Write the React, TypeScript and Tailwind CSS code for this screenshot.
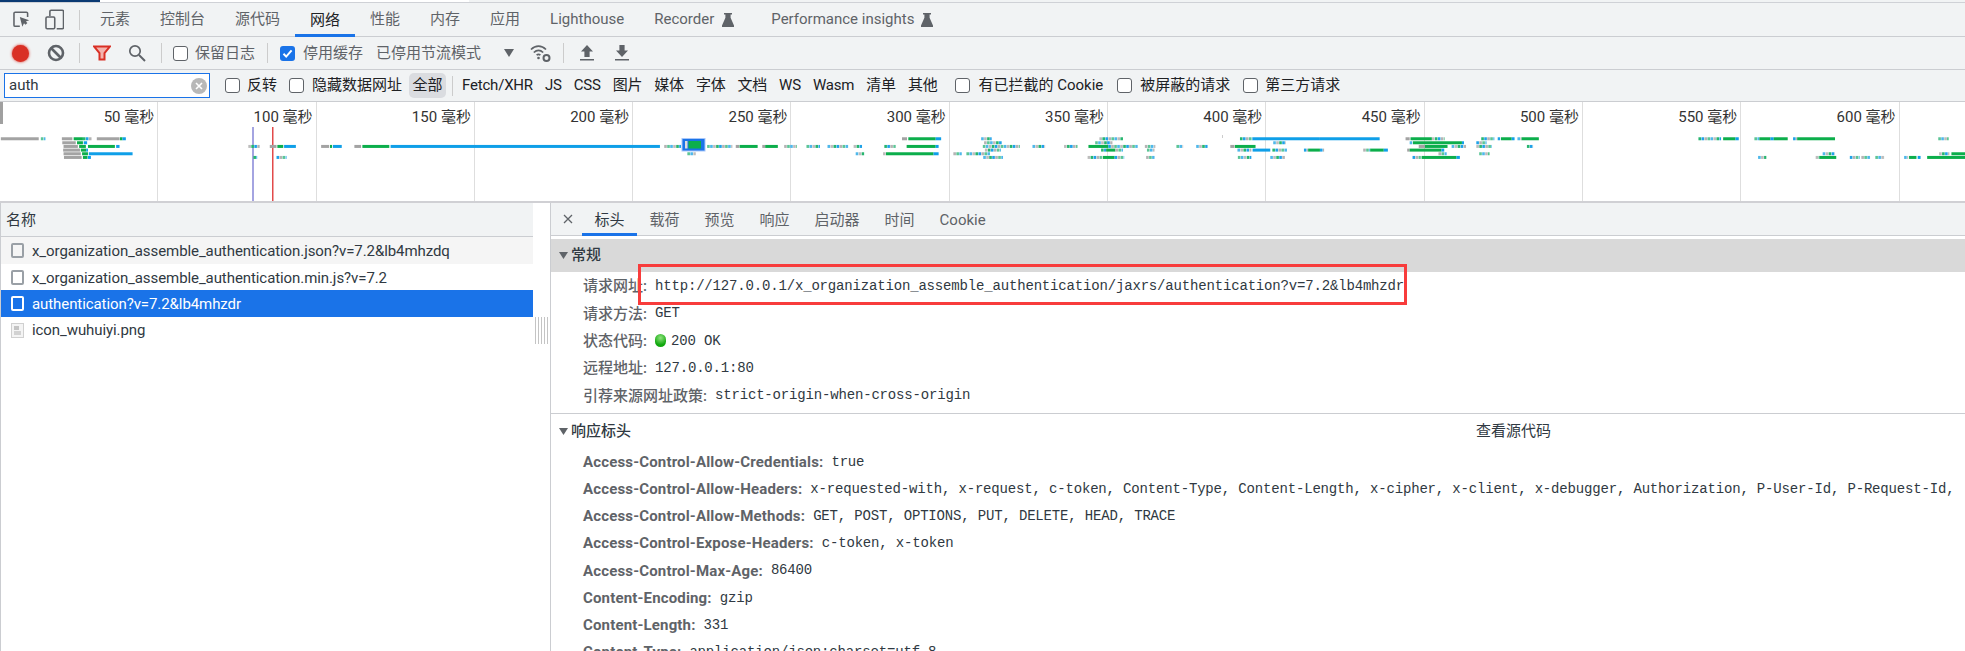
import type { ReactNode } from "react";

const MONO = "font-['Liberation_Mono','Noto_Sans_CJK_SC',monospace] text-[14px] tracking-[-0.17px] font-normal text-[#303942]";

const TABS = ["元素", "控制台", "源代码", "网络", "性能", "内存", "应用", "Lighthouse"];
const DETAIL_TABS = ["标头", "载荷", "预览", "响应", "启动器", "时间", "Cookie"];
const TYPES = ["Fetch/XHR", "JS", "CSS", "图片", "媒体", "字体", "文档", "WS", "Wasm", "清单", "其他"];
const TICKS = [50, 100, 150, 200, 250, 300, 350, 400, 450, 500, 550, 600];

const GENERAL: [string, ReactNode][] = [
  ["请求网址", "http://127.0.0.1/x_organization_assemble_authentication/jaxrs/authentication?v=7.2&lb4mhzdr"],
  ["请求方法", "GET"],
  ["状态代码", <><span className="inline-block w-[11px] h-[13px] rounded-full bg-[radial-gradient(circle_at_50%_30%,#8fe37d,#12a80f_65%)] mr-[5px] align-[-2px]" />200 OK</>],
  ["远程地址", "127.0.0.1:80"],
  ["引荐来源网址政策", "strict-origin-when-cross-origin"],
];

const RESPONSE: [string, string][] = [
  ["Access-Control-Allow-Credentials", "true"],
  ["Access-Control-Allow-Headers", "x-requested-with, x-request, c-token, Content-Type, Content-Length, x-cipher, x-client, x-debugger, Authorization, P-User-Id, P-Request-Id,"],
  ["Access-Control-Allow-Methods", "GET, POST, OPTIONS, PUT, DELETE, HEAD, TRACE"],
  ["Access-Control-Expose-Headers", "c-token, x-token"],
  ["Access-Control-Max-Age", "86400"],
  ["Content-Encoding", "gzip"],
  ["Content-Length", "331"],
  ["Content-Type", "application/json;charset=utf-8"],
];

// waterfall segments: row, from, to, kind (measured off the overview strip)
type Seg = [number, number, number, "g" | "e" | "b" | "m"];

const PART_A: Seg[] = [
  [116, 2, 92, "g"], [116, 97, 108, "m"], [116, 147, 172, "g"], [116, 175, 197, "e"], [116, 197, 218, "m"], [116, 230, 284, "g"], [116, 285, 291, "e"], [116, 291, 299, "b"],
  [128, 148, 180, "g"], [128, 183, 197, "e"], [128, 199, 207, "b"],
  [139, 151, 185, "g"], [139, 188, 204, "e"], [139, 209, 273, "e"], [139, 276, 284, "b"], [139, 590, 617, "m"], [139, 641, 657, "g"], [139, 659, 673, "e"], [139, 675, 703, "b"],
  [139, 763, 782, "g"], [139, 784, 789, "e"], [139, 791, 812, "b"], [139, 842, 858, "g"], [139, 861, 925, "e"], [139, 928, 1568, "b"],
  [150, 150, 190, "g"], [150, 192, 205, "e"], [150, 205, 209, "b"],
  [161, 151, 192, "g"], [161, 195, 209, "e"], [161, 211, 315, "b"],
  [172, 152, 194, "g"], [172, 197, 208, "e"], [172, 209, 216, "b"], [172, 602, 611, "m"], [172, 657, 681, "m"],
];

const PART_B: Seg[] = [
  [139, 10, 50, "m"], [139, 112, 172, "m"], [139, 180, 188, "g"], [139, 189, 232, "e"], [139, 243, 250, "g"], [139, 250, 280, "e"], [139, 295, 325, "m"], [139, 348, 380, "m"], [139, 398, 447, "m"], [139, 460, 480, "m"],
  [139, 533, 560, "m"], [139, 586, 655, "e"], [139, 655, 662, "b"], [139, 767, 855, "m"], [139, 885, 915, "m"], [139, 960, 992, "m"], [139, 1018, 1065, "e"], [139, 1065, 1135, "m"], [139, 1152, 1177, "m"], [139, 1227, 1243, "m"], [139, 1274, 1301, "m"], [139, 1355, 1365, "g"], [139, 1366, 1415, "e"],
  [116, 575, 587, "g"], [116, 590, 655, "e"], [116, 655, 668, "b"], [116, 763, 788, "m"], [116, 1044, 1100, "m"], [116, 1378, 1408, "m"], [116, 1408, 1568, "b"],
  [128, 770, 812, "m"], [128, 1034, 1075, "m"], [128, 1457, 1487, "m"],
  [150, 772, 810, "m"], [150, 1048, 1060, "m"], [150, 1060, 1082, "e"], [150, 1082, 1100, "m"], [150, 1157, 1175, "m"], [150, 1372, 1405, "m"], [150, 1408, 1450, "b"], [150, 1455, 1490, "m"], [150, 1530, 1540, "m"], [150, 1540, 1568, "e"],
  [161, 65, 85, "m"], [161, 465, 485, "m"], [161, 530, 537, "m"], [161, 537, 650, "e"], [161, 650, 662, "b"], [161, 697, 717, "m"], [161, 728, 785, "m"],
  [172, 768, 815, "m"], [172, 1016, 1050, "m"], [172, 1052, 1080, "e"], [172, 1080, 1103, "m"], [172, 1155, 1175, "m"], [172, 1373, 1405, "m"], [172, 1450, 1485, "m"],
];

const PART_C: Seg[] = [
  [116, 0, 145, "b"], [116, 208, 218, "g"], [116, 220, 272, "e"], [116, 272, 303, "m"], [116, 392, 424, "m"], [116, 432, 438, "m"], [116, 440, 466, "e"], [116, 466, 473, "b"], [116, 480, 490, "m"], [116, 490, 532, "e"],
  [116, 920, 975, "m"], [116, 980, 1010, "e"], [116, 1010, 1018, "b"], [116, 1056, 1068, "m"], [116, 1068, 1095, "e"], [116, 1095, 1103, "b"], [116, 1103, 1137, "e"], [116, 1150, 1160, "m"], [116, 1160, 1252, "e"], [116, 1503, 1528, "m"],
  [128, 218, 225, "m"], [128, 226, 345, "e"], [128, 345, 350, "b"], [128, 380, 405, "m"],
  [139, 240, 255, "g"], [139, 255, 310, "e"], [139, 320, 355, "m"], [139, 380, 418, "m"], [139, 503, 518, "m"],
  [150, 0, 10, "m"], [150, 105, 122, "m"], [150, 122, 155, "e"], [150, 155, 165, "b"], [150, 212, 218, "g"], [150, 218, 295, "e"], [150, 295, 302, "b"],
  [161, 288, 308, "m"], [161, 387, 412, "m"], [161, 1222, 1252, "m"], [161, 1505, 1530, "m"], [161, 1535, 1568, "e"],
  [172, 225, 245, "m"], [172, 247, 332, "e"], [172, 332, 340, "b"], [172, 1065, 1085, "m"], [172, 1205, 1215, "m"], [172, 1215, 1255, "e"], [172, 1288, 1312, "m"], [172, 1316, 1338, "m"], [172, 1350, 1372, "m"], [172, 1420, 1430, "m"], [172, 1432, 1450, "e"], [172, 1453, 1460, "b"], [172, 1476, 1568, "e"],
];

const COLORS = { g: "#a3a3a3", e: "#0cae4b", b: "#0f9fe8" };
const MIX = ["#b4b4b4", "#5cc596", "#4fb8ea", "#bdbdbd", "#27b56f", "#1fa2e8"];

function Bars({ segs, offset, sx }: { segs: Seg[]; offset: number; sx: number }) {
  return (
    <>
      {segs.map(([row, from, to, kind], i) => {
        const x = offset + from / sx;
        const w = (to - from) / sx;
        const y = row / 3 - 3.4;
        if (kind !== "m") return <rect key={i} x={x} y={y} width={w} height={3} fill={COLORS[kind]} />;
        const blocks = [];
        for (let n = 0; n * 3 < w; n++) {
          blocks.push(<rect key={n} x={x + n * 3} y={y} width={Math.min(2.6, w - n * 3)} height={3} fill={MIX[(n + i) % MIX.length]} />);
        }
        return <g key={i}>{blocks}</g>;
      })}
    </>
  );
}

function Checkbox({ checked = false }: { checked?: boolean }) {
  if (checked) {
    return (
      <span className="w-[15px] h-[15px] rounded-[3px] bg-[#1a73e8] flex items-center justify-center shrink-0">
        <svg width="13" height="13" viewBox="0 0 13 13" fill="none"><path d="M2.5 6.8 5.2 9.6 10.6 3.4" stroke="#fff" strokeWidth="2" /></svg>
      </span>
    );
  }
  return <span className="block w-[15px] h-[15px] rounded-[3px] border border-[#5f6368] bg-white shrink-0" />;
}

function Flask({ className }: { className?: string }) {
  return (
    <svg width="12" height="14" viewBox="0 0 12 14" className={className}>
      <path d="M2 0h8v1.4H8.6v3.4L12 12.6V14H0v-1.4l3.4-7.8V1.4H2z" fill="#5f6368" />
    </svg>
  );
}

function FileIcon({ color = "#9aa0a6" }: { color?: string }) {
  return <span className="w-[13px] h-[15px] rounded-[2px] border-2 shrink-0 bg-transparent -mt-[2px]" style={{ borderColor: color }} />;
}

function Divider() {
  return <span className="block w-px h-[20px] bg-[#ccc] shrink-0" />;
}

export default function App() {
  return (
    <div className="w-[1965px] h-[651px] overflow-hidden bg-white text-[15px] text-[#202124] font-['Roboto','Noto_Sans_CJK_SC',sans-serif] relative">
      {/* Strip of the page above devtools */}
      <div className="h-[3px] flex border-b border-[#cfd1d6]">
        <div className="w-[100px] bg-[#0b3a73]" />
        <div className="w-[369px] bg-white" />
        <div className="flex-1 bg-[#f1f3f4]" />
      </div>

      {/* Main tabs */}
      <div className="h-[34px] bg-[#f1f3f4] border-b border-[#cbcdd1] flex items-stretch">
        <div className="flex items-center pl-[13px] w-[80px] shrink-0">
          <svg width="18" height="17" viewBox="0 0 18 17" fill="none">
            <path d="M7 15.5H2.2a1.2 1.2 0 0 1-1.2-1.2V2.2A1.2 1.2 0 0 1 2.2 1h11.6A1.2 1.2 0 0 1 15 2.2V6" stroke="#5f6368" strokeWidth="1.6" />
            <path d="M7 6l2.6 10 1.7-3.6 1.5 1.6 2-1.8-1.6-1.7 3.4-1.3z" fill="#5f6368" />
          </svg>
          <svg width="20" height="21" viewBox="0 0 20 21" fill="none" className="ml-[14px]">
            <path d="M5 7V2.2A1.2 1.2 0 0 1 6.2 1h11.6A1.2 1.2 0 0 1 19 2.2v16.6a1.2 1.2 0 0 1-1.2 1.2H12" stroke="#5f6368" strokeWidth="1.6" />
            <rect x="1" y="8" width="9" height="12" rx="1.2" stroke="#5f6368" strokeWidth="1.6" />
          </svg>
          <span className="ml-[15px] w-px h-[20px] bg-[#ccc]" />
        </div>
        <div className="flex items-stretch pl-[5px]">
          {TABS.map(t => (
            <span
              key={t}
              className={t === "网络"
                ? "px-[15px] flex items-center border-b-[3px] border-[#1a73e8] pt-[3px] -mb-px text-[#202124]"
                : "px-[15px] flex items-center text-[#5f6368]"}
            >
              {t}
            </span>
          ))}
          <span className="pl-[15px] flex items-center text-[#5f6368]">Recorder<Flask className="ml-[8px]" /></span>
          <span className="pl-[37px] flex items-center text-[#5f6368]">Performance insights<Flask className="ml-[7px]" /></span>
        </div>
      </div>

      {/* Network toolbar */}
      <div className="h-[33px] bg-[#f1f3f4] border-b border-[#cbcdd1] flex items-center">
        <span className="ml-[12px] w-[17px] h-[17px] rounded-full bg-[#d93025] shadow-[0_0_3px_#d93025]" />
        <svg width="18" height="18" viewBox="0 0 18 18" fill="none" className="ml-[18px]">
          <circle cx="9" cy="9" r="7" stroke="#5f6368" strokeWidth="2.6" />
          <path d="M4 4l10 10" stroke="#5f6368" strokeWidth="2.6" />
        </svg>
        <span className="ml-[14px]"><Divider /></span>
        <svg width="18" height="16" viewBox="0 0 18 16" fill="none" className="ml-[13px]">
          <path d="M1 1.5h16L11.5 8v6.5h-5V8z" fill="#f4b4ae" stroke="#d93025" strokeWidth="2" />
        </svg>
        <svg width="18" height="18" viewBox="0 0 18 18" fill="none" className="ml-[17px]">
          <circle cx="7" cy="7" r="5.2" stroke="#5f6368" strokeWidth="1.7" />
          <path d="M11 11l6 6" stroke="#5f6368" strokeWidth="2" />
        </svg>
        <span className="ml-[15px]"><Divider /></span>
        <span className="ml-[11px]"><Checkbox /></span>
        <span className="ml-[7px] text-[#5f6368]">保留日志</span>
        <span className="ml-[12px]"><Divider /></span>
        <span className="ml-[12px]"><Checkbox checked /></span>
        <span className="ml-[8px] text-[#5f6368]">停用缓存</span>
        <span className="ml-[13px] text-[#5f6368]">已停用节流模式</span>
        <svg width="10" height="8" viewBox="0 0 10 8" className="ml-[23px]"><path d="M0 0h10L5 8z" fill="#5f6368" /></svg>
        <svg width="21" height="18" viewBox="0 0 21 18" fill="none" className="ml-[16px]">
          <path d="M1 5.5C5.5 1 11.5 1 16 5.5M3.8 8.5C7 5.5 10 5.5 13.2 8.5M6.6 11.2C8 10 9 10 10.4 11.2" stroke="#5f6368" strokeWidth="1.7" />
          <circle cx="8.5" cy="14" r="1.3" fill="#5f6368" />
          <circle cx="16.5" cy="14" r="3" stroke="#5f6368" strokeWidth="2" />
        </svg>
        <span className="ml-[12px]"><Divider /></span>
        <svg width="14" height="16" viewBox="0 0 14 16" className="ml-[16px]"><path d="M7 0l6 6.5H9.6V12H4.4V6.5H1zM0 14h14v1.6H0z" fill="#5f6368" /></svg>
        <svg width="14" height="16" viewBox="0 0 14 16" className="ml-[21px]"><path d="M4.4 0h5.2v5.5H13L7 12 1 5.5h3.4zM0 14h14v1.6H0z" fill="#5f6368" /></svg>
      </div>

      {/* Filter bar */}
      <div className="h-[32px] bg-[#f1f3f4] border-b border-[#cbcdd1] flex items-center">
        <div className="ml-[4px] w-[206px] h-[25px] bg-white border border-[#1a73e8] flex items-center pl-[4px] pr-[2px] justify-between">
          <span className="text-[#303942]">auth</span>
          <span className="w-[16px] h-[16px] rounded-full bg-[#b8b8b8] flex items-center justify-center">
            <svg width="8" height="8" viewBox="0 0 8 8"><path d="M1 1l6 6M7 1L1 7" stroke="#fff" strokeWidth="1.6" /></svg>
          </span>
        </div>
        <span className="ml-[15px]"><Checkbox /></span>
        <span className="ml-[7px]">反转</span>
        <span className="ml-[12px]"><Checkbox /></span>
        <span className="ml-[8px]">隐藏数据网址</span>
        <span className="ml-[7px] w-[37px] h-[25px] rounded-[5px] bg-[#dadce0] flex items-center justify-center">全部</span>
        <span className="ml-[6px] w-px h-[20px] bg-[#ccc]" />
        <div className="ml-[9px] flex items-center gap-[12px] tracking-[-0.2px]">
          {TYPES.map(t => <span key={t}>{t}</span>)}
        </div>
        <span className="ml-[18px]"><Checkbox /></span>
        <span className="ml-[8px]">有已拦截的 Cookie</span>
        <span className="ml-[14px]"><Checkbox /></span>
        <span className="ml-[8px]">被屏蔽的请求</span>
        <span className="ml-[13px]"><Checkbox /></span>
        <span className="ml-[7px]">第三方请求</span>
      </div>

      {/* Overview timeline */}
      <div className="h-[101px] relative flex border-b-[2px] border-[#d0d0d4] overflow-hidden">
        {TICKS.map(t => (
          <div key={t} className="w-[158.3px] shrink-0 border-r border-[#dedede] text-right pr-[3px] pt-[5px] leading-[20px] text-[#333]">
            {t} 毫秒
          </div>
        ))}
        <span className="absolute left-0 top-0 w-[3px] h-[22px] bg-[#a0a0a0]" />
        <svg width="1965" height="99" className="absolute left-0 top-0">
          <rect x="252.5" y="25" width="1" height="74" fill="#4a4ac4" />
          <rect x="272" y="25" width="1.5" height="74" fill="#e24a4a" />
          <Bars segs={PART_A} offset={0} sx={2.376} />
          <Bars segs={PART_B} offset={660} sx={2.376} />
          <Bars segs={PART_C} offset={1320} sx={2.431} />
          <rect x="682" y="36.5" width="23" height="12.5" fill="#1a73e8" stroke="#a8c7fa" strokeWidth="1" />
          <rect x="685" y="39" width="2.5" height="7.5" fill="#ddd" />
          <rect x="688.5" y="39" width="12.5" height="7.5" fill="#0cae4b" />
          <rect x="1222" y="33" width="1" height="3" fill="#ccc" />
        </svg>
      </div>

      <div className="flex h-[448px]">
        {/* Request list */}
        <div className="w-[533px] shrink-0 border-l border-[#cbcdd1] tracking-[-0.08px]">
          <div className="h-[34px] bg-[#f1f3f4] border-b border-[#cbcdd1] flex items-center pl-[5px] pt-[2px] text-[#303942]">名称</div>
          <div className="h-[26.7px] bg-[#f5f5f5] flex items-center pl-[10px] pt-[2px] gap-[8px] text-[#303942]"><FileIcon /><span>x_organization_assemble_authentication.json?v=7.2&amp;lb4mhzdq</span></div>
          <div className="h-[26.7px] flex items-center pl-[10px] pt-[2px] gap-[8px] text-[#303942]"><FileIcon /><span>x_organization_assemble_authentication.min.js?v=7.2</span></div>
          <div className="h-[26.7px] bg-[#1a73e8] text-white flex items-center pl-[10px] pt-[2px] gap-[8px]"><FileIcon color="#fff" /><span>authentication?v=7.2&amp;lb4mhzdr</span></div>
          <div className="h-[26.7px] flex items-center pl-[10px] gap-[8px] text-[#303942]">
            <svg width="13" height="15" viewBox="0 0 13 15" className="shrink-0">
              <rect x="0.5" y="0.5" width="12" height="14" fill="#f4f4f4" stroke="#d0d0d0" />
              <rect x="3" y="3" width="5" height="4" fill="#c4c4c4" />
              <rect x="3" y="8" width="7" height="4" fill="#d2d2d2" />
            </svg>
            <span>icon_wuhuiyi.png</span>
          </div>
        </div>
        <div className="w-[18px] shrink-0 pt-[114px] pl-[2px] border-r border-[#cbcdd1] flex gap-[2px] items-start">
          <span className="w-px h-[27px] bg-[#c4c4c4]" />
          <span className="w-px h-[27px] bg-[#c4c4c4]" />
          <span className="w-px h-[27px] bg-[#c4c4c4]" />
          <span className="w-px h-[27px] bg-[#c4c4c4]" />
          <span className="w-px h-[27px] bg-[#c4c4c4]" />
        </div>

        {/* Details */}
        <div className="flex-1 min-w-0 relative">
          <div className="h-[33px] bg-[#f1f3f4] border-b border-[#cbcdd1] flex items-stretch">
            <span className="w-[31px] flex items-center justify-end pr-[9px]">
              <svg width="10" height="10" viewBox="0 0 10 10"><path d="M1 1l8 8M9 1L1 9" stroke="#5f6368" strokeWidth="1.3" /></svg>
            </span>
            {DETAIL_TABS.map(t => (
              <span
                key={t}
                className={t === "标头"
                  ? "px-[12.5px] flex items-center border-b-[3px] border-[#1a73e8] pt-[5px] -mb-px text-[#303942]"
                  : "px-[12.5px] pt-[2px] flex items-center text-[#5f6368]"}
              >
                {t}
              </span>
            ))}
          </div>
          <div className="h-[3px]" />
          <div className="h-[33px] bg-[#d9d9d9] flex items-center pl-[8px] text-[#303942] font-medium">
            <svg width="9" height="7" viewBox="0 0 9 7" className="mr-[3px]"><path d="M0 0h9L4.5 7z" fill="#5f6368" /></svg>
            常规
          </div>
          <div className="pt-px pb-[4px] border-b border-[#cbcdd1]">
            {GENERAL.map(([k, v]) => (
              <div key={k} className="h-[27.3px] flex items-center pl-[32px] whitespace-nowrap font-medium text-[#5f6368]">
                <span>{k}:</span>
                <span className={`ml-[8px] ${MONO}`}>{v}</span>
              </div>
            ))}
          </div>
          <div className="h-[34px] flex items-center pl-[8px] text-[#303942] font-medium relative">
            <svg width="9" height="7" viewBox="0 0 9 7" className="mr-[3px]"><path d="M0 0h9L4.5 7z" fill="#5f6368" /></svg>
            响应标头
            <span className="absolute left-[925px] font-normal">查看源代码</span>
          </div>
          {RESPONSE.map(([k, v]) => (
            <div key={k} className="h-[27.2px] flex items-center pl-[32px] whitespace-nowrap font-bold text-[#5f6368] tracking-[0.16px]">
              <span>{k}:</span>
              <span className={`ml-[8px] ${MONO}`}>{v}</span>
            </div>
          ))}
          {/* Red annotation box drawn over the url */}
          <div className="absolute left-[87px] top-[61px] w-[769px] h-[41px] border-[3px] border-[#f83c3c]" />
        </div>
      </div>
    </div>
  );
}
